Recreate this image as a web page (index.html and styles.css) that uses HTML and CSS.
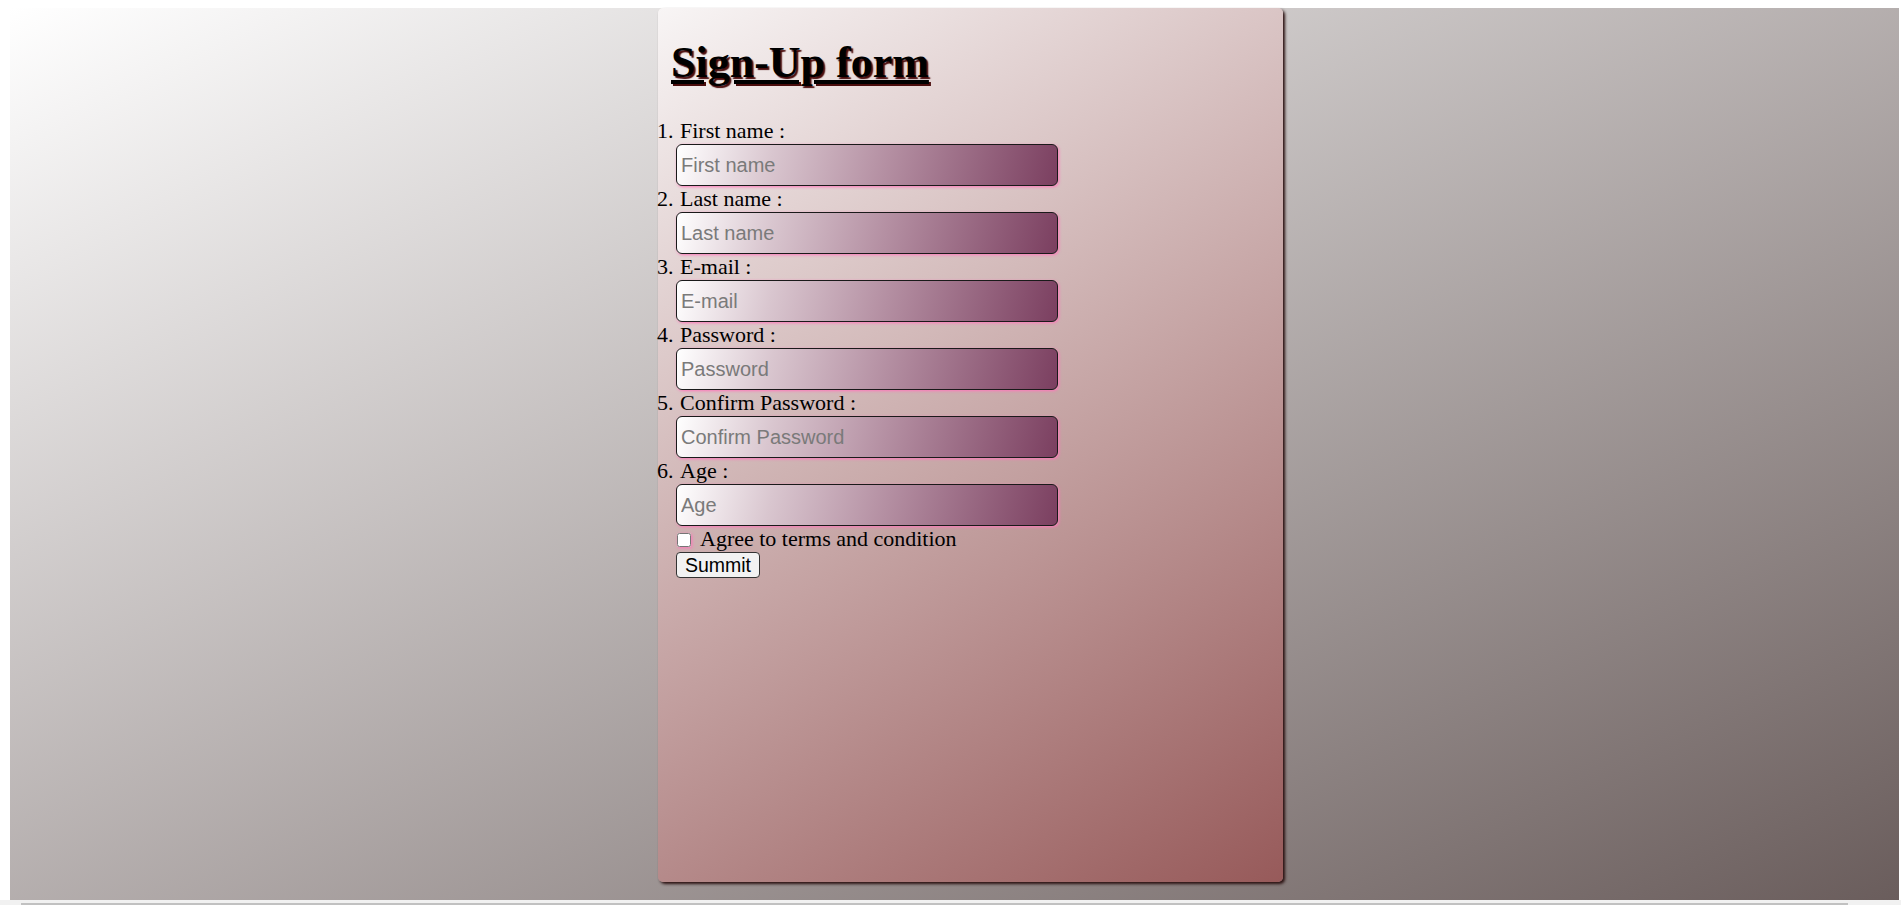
FILE: index.html
```html
<!DOCTYPE html>
<html lang="en">
<head>
<meta charset="utf-8">
<title>Sign-Up form</title>
<link rel="stylesheet" href="styles.css">
</head>
<body>
<div class="page">
  <div class="card">
    <h1 class="title">Sign-Up form</h1>
    <form class="form">
      <ol class="fields">
        <li class="field"><label class="label">First name :</label><input class="text" type="text" placeholder="First name"></li>
        <li class="field"><label class="label">Last name :</label><input class="text" type="text" placeholder="Last name"></li>
        <li class="field"><label class="label">E-mail :</label><input class="text" type="email" placeholder="E-mail"></li>
        <li class="field"><label class="label">Password :</label><input class="text" type="password" placeholder="Password"></li>
        <li class="field"><label class="label">Confirm Password :</label><input class="text" type="password" placeholder="Confirm Password"></li>
        <li class="field"><label class="label">Age :</label><input class="text" type="number" placeholder="Age"></li>
      </ol>
      <div class="extras">
        <div class="agree"><input class="check" type="checkbox" id="agree"><label for="agree">Agree to terms and condition</label></div>
        <button class="submit" type="button">Summit</button>
      </div>
    </form>
  </div>
</div>
<div class="hscroll"><div class="hthumb"></div></div>
</body>
</html>
```
FILE: styles.css
```css
html, body {
  margin: 0;
  padding: 0;
  background: #ffffff;
}
body {
  font-family: "Liberation Serif", "Times New Roman", serif;
  width: 1901px;
  height: 905px;
  overflow: hidden;
}
.page {
  margin: 8px 2px 0 10px;
  height: 892px;
  background: linear-gradient(to bottom right, #ffffff, #6a5d5c);
  display: flow-root;
}
.card {
  margin-left: 648px;
  width: 625px;
  height: 874px;
  border-radius: 5px;
  background: linear-gradient(148deg, #f8f5f5, #975a5a);
  box-shadow: 2px 2px 3px #2a1010;
  display: flow-root;
}
.title {
  margin: 30px 0 31px 13px;
  font-size: 44px;
  line-height: 49px;
  font-weight: bold;
  text-decoration: underline;
  color: #000;
  text-shadow: 2px 2px 1px #4a0c0c;
}
.form {
  margin: 0;
}
.fields {
  margin: 0;
  padding-left: 20px;
  font-size: 22px;
}
.field {
  line-height: 26px;
}
.field::marker {
  content: counter(list-item) ".\2009";
}
.label {
  display: block;
  padding-left: 2px;
  height: 26px;
}
.text {
  display: block;
  box-sizing: border-box;
  margin: 0 0 0 -2px;
  width: 382px;
  height: 42px;
  padding: 0 4px;
  border: 1px solid #1a1a1a;
  border-radius: 6px;
  font-family: "Liberation Sans", Arial, sans-serif;
  font-size: 20px;
  color: #222;
  background: linear-gradient(104deg, #ffffff 0%, #d9c6cf 25%, #b48fa2 55%, #7b3f60 100%);
  box-shadow: 1px 1px 3px #ff77bb;
  outline: none;
}
.text::placeholder {
  color: #7a7a7a;
}
.extras {
  padding-left: 18px;
  font-size: 22px;
}
.agree {
  line-height: 26px;
  height: 26px;
}
.check {
  width: 14px;
  height: 14px;
  margin: 3px 9px 3px 1px;
  vertical-align: -1px;
  box-shadow: 1px 1px 3px #ff77bb;
}
.submit {
  display: block;
  box-sizing: border-box;
  width: 84px;
  height: 26px;
  padding: 0;
  border: 1px solid #333;
  border-radius: 4px;
  background: #f2f2f2;
  font-family: "Liberation Sans", Arial, sans-serif;
  font-size: 19.5px;
  color: #000;
}
.hscroll {
  height: 5px;
  background: #f1f1f1;
}
.hthumb {
  margin-left: 21px;
  width: 1827px;
  height: 2px;
  position: relative;
  top: 3px;
  background: #c1c1c1;
}
```
